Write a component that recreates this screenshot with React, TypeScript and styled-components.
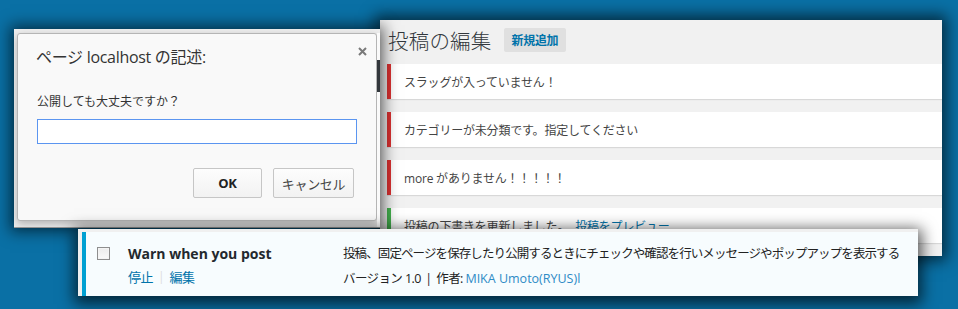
import styled, { createGlobalStyle } from "styled-components";

const GlobalStyle = createGlobalStyle`
  html, body {
    margin: 0;
    padding: 0;
  }
  body {
    font-family: "Open Sans", "Noto Sans CJK JP", sans-serif;
    -webkit-font-smoothing: antialiased;
  }
`;

const notices = [
	{ kind: "error", text: "スラッグが入っていません！" },
	{ kind: "error", text: "カテゴリーが未分類です。指定してください" },
	{ kind: "error", text: "more がありません！！！！！" },
];

const CloseIcon = () => (
	<svg width="9" height="9" viewBox="0 0 9 9">
		<path d="M1 1 L8 8 M8 1 L1 8" stroke="#7a7a7a" strokeWidth="2" />
	</svg>
);

const App = () => {
	return (
		<>
			<GlobalStyle />
			<Desktop>
				<EditWindow>
					<EditHeader>
						<PageTitle>投稿の編集</PageTitle>
						<AddNew>新規追加</AddNew>
					</EditHeader>
					{notices.map((n) => (
						<Notice key={n.text} $kind={n.kind}>
							{n.text}
						</Notice>
					))}
					<Notice $kind="success">
						投稿の下書きを更新しました。 <NoticeLink>投稿をプレビュー</NoticeLink>
					</Notice>
				</EditWindow>

				<PromptFrame>
					<Dialog>
						<DialogHeader>
							<DialogTitle>ページ localhost の記述:</DialogTitle>
							<CloseButton>
								<CloseIcon />
							</CloseButton>
						</DialogHeader>
						<DialogBody>
							<Message>公開しても大丈夫ですか？</Message>
							<PromptInput />
							<ButtonRow>
								<DialogButton $primary>OK</DialogButton>
								<DialogButton>キャンセル</DialogButton>
							</ButtonRow>
						</DialogBody>
					</Dialog>
					<PageBehind>
						<AdminBarPeek />
					</PageBehind>
				</PromptFrame>

				<PluginRow>
					<PluginInner>
						<CheckCell>
							<Checkbox />
						</CheckCell>
						<TitleCell>
							<PluginName>Warn when you post</PluginName>
							<Actions>
								<ActionLink>停止</ActionLink>
								<Sep>|</Sep>
								<ActionLink>編集</ActionLink>
							</Actions>
						</TitleCell>
						<DescCell>
							<Description>
								投稿、固定ページを保存したり公開するときにチェックや確認を行いメッセージやポップアップを表示する
							</Description>
							<Meta>
								バージョン 1.0 <MetaSep>|</MetaSep> 作者: <AuthorLink>MIKA Umoto(RYUS)l</AuthorLink>
							</Meta>
						</DescCell>
					</PluginInner>
				</PluginRow>
			</Desktop>
		</>
	);
};

const Desktop = styled.div`
	position: relative;
	width: 958px;
	height: 309px;
	overflow: hidden;
	background-color: #0a70a5;
`;

// windows pasted on the blue canvas
const EditWindow = styled.div`
	position: absolute;
	left: 380px;
	top: 20px;
	width: 562px;
	height: 236px;
	z-index: 1;
	background-color: #f1f1f1;
	box-shadow: 0 0 14px 5px rgba(0, 0, 0, 0.6);
	overflow: hidden;
	display: flex;
	flex-direction: column;
`;

const EditHeader = styled.div`
	display: flex;
	align-items: center;
	height: 40px;
	padding-left: 8px;
	margin-bottom: 5px;
`;

const PageTitle = styled.h1`
	margin: 0;
	font-family: "Noto Sans CJK JP", sans-serif;
	font-size: 20.5px;
	font-weight: 300;
	letter-spacing: 0.2px;
	color: #32373c;
	line-height: 24px;
`;

const AddNew = styled.span`
	margin-left: 12px;
	height: 24px;
	line-height: 24px;
	padding: 0 8px;
	background-color: #e0e0e0;
	border-radius: 2px;
	color: #0073aa;
	font-family: "Noto Sans CJK JP", sans-serif;
	font-size: 12px;
	font-weight: 700;
	letter-spacing: -0.3px;
`;

const Notice = styled.div<{ $kind: string }>`
	flex-shrink: 0;
	margin: 0 0 13px 7px;
	height: 35px;
	display: flex;
	align-items: center;
	padding-left: 13px;
	background-color: #fff;
	border-left: 4px solid ${(p) => (p.$kind === "success" ? "#46b450" : "#dc3232")};
	box-shadow: 0 1px 1px rgba(0, 0, 0, 0.1);
	font-size: 12px;
	letter-spacing: -0.2px;
	color: #444;
`;

const NoticeLink = styled.span`
	margin-left: 6px;
	color: #0073aa;
	text-decoration: underline;
`;

const PromptFrame = styled.div`
	position: absolute;
	left: 14px;
	top: 29px;
	width: 366px;
	height: 199px;
	z-index: 2;
	box-sizing: border-box;
	display: flex;
	padding: 4px 0 0 3px;
	background-color: #eeeeee;
	border-bottom: 1px solid #9a9a9a;
	box-shadow: 0 0 14px 4px rgba(0, 0, 0, 0.55);
`;

const PageBehind = styled.div`
	flex: 1;
	padding-top: 27px;
	background-color: #fafafa;
`;

const AdminBarPeek = styled.div`
	height: 32px;
	background-color: #32373c;
`;

const Dialog = styled.div`
	box-sizing: border-box;
	width: 360px;
	height: 188px;
	display: flex;
	flex-direction: column;
	background-color: #f9f9f9;
	border: 1px solid #b5b5b5;
	border-radius: 3px;
	box-shadow: 0 3px 8px rgba(0, 0, 0, 0.25);
`;

const DialogHeader = styled.div`
	display: flex;
	justify-content: space-between;
	align-items: flex-start;
	padding: 12px 9px 0 18px;
`;

const DialogTitle = styled.div`
	font-size: 16px;
	line-height: 22px;
	color: #333;
	letter-spacing: -0.3px;
`;

const CloseButton = styled.span`
	display: flex;
	margin-top: 1px;
`;

const DialogBody = styled.div`
	display: flex;
	flex-direction: column;
	padding: 0 22px 0 19px;
`;

const Message = styled.div`
	margin-top: 26px;
	font-size: 12px;
	line-height: 16px;
	color: #333;
`;

const PromptInput = styled.div`
	box-sizing: border-box;
	margin-top: 9px;
	width: 320px;
	height: 25px;
	background-color: #fff;
	border: 1px solid #5b95f0;
`;

const ButtonRow = styled.div`
	display: flex;
	justify-content: flex-end;
	gap: 11px;
	margin-top: 24px;
`;

const DialogButton = styled.span<{ $primary?: boolean }>`
	box-sizing: border-box;
	height: 30px;
	width: ${(p) => (p.$primary ? "69px" : "81px")};
	display: flex;
	align-items: center;
	justify-content: center;
	border: 1px solid #c6c6c6;
	border-radius: 2px;
	background: linear-gradient(#fdfdfd, #f2f2f2);
	font-size: 13px;
	font-weight: ${(p) => (p.$primary ? 700 : 400)};
	color: ${(p) => (p.$primary ? "#222" : "#444")};
	letter-spacing: -0.3px;
`;

const PluginRow = styled.div`
	position: absolute;
	left: 78px;
	top: 229px;
	width: 840px;
	height: 67px;
	z-index: 3;
	box-sizing: border-box;
	padding: 3px 0 0 4px;
	background-color: #f0f0f0;
	box-shadow: 0 4px 14px 4px rgba(0, 0, 0, 0.65);
`;

const PluginInner = styled.div`
	box-sizing: border-box;
	height: 100%;
	display: grid;
	grid-template-columns: 42px 215px 1fr;
	padding-top: 12px;
	background-color: #f7fcfe;
	border-left: 4px solid #00a0d2;
`;

const CheckCell = styled.div`
	padding: 3px 0 0 11px;
`;

const Checkbox = styled.div`
	box-sizing: border-box;
	width: 13px;
	height: 13px;
	border: 1px solid #8e8e8e;
	background: linear-gradient(#ececec, #fafafa);
	box-shadow: inset 0 0 0 1px #f4f4f4;
`;

const TitleCell = styled.div`
	display: flex;
	flex-direction: column;
`;

const PluginName = styled.div`
	font-size: 14px;
	font-weight: 700;
	line-height: 20px;
	color: #23282d;
`;

const Actions = styled.div`
	display: flex;
	align-items: center;
	gap: 5px;
	margin-top: 4px;
	font-size: 13px;
	line-height: 18px;
`;

const ActionLink = styled.span`
	color: #0073aa;
	letter-spacing: -0.5px;
`;

const Sep = styled.span`
	color: #ddd;
	font-size: 12px;
`;

const DescCell = styled.div`
	display: flex;
	flex-direction: column;
	color: #222;
`;

const Description = styled.div`
	font-size: 12.5px;
	line-height: 20px;
	letter-spacing: -0.9px;
	white-space: nowrap;
`;

const Meta = styled.div`
	margin-top: 6px;
	font-size: 12.5px;
	line-height: 18px;
	letter-spacing: -0.6px;
`;

const MetaSep = styled.span`
	margin: 0 2px;
`;

const AuthorLink = styled.span`
	color: #2e8bc6;
	letter-spacing: 0;
`;

export default App;
